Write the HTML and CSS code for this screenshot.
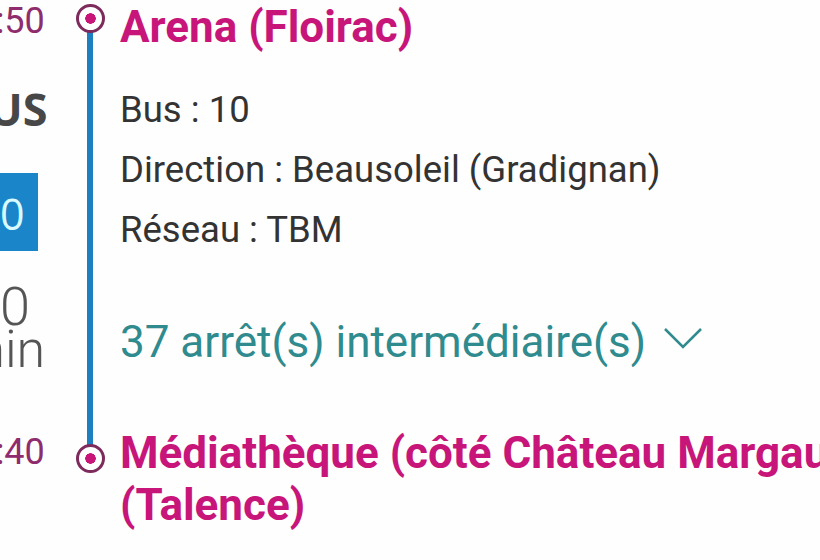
FILE: index.html
```html
<!DOCTYPE html>
<html lang="fr">
<head>
<meta charset="UTF-8">
<meta name="viewport" content="width=device-width, initial-scale=1.0">
<title>Itinéraire - Bus 10</title>
<link rel="stylesheet" href="styles.css">
</head>
<body>

<main class="journey">
    <!-- departure -->
    <div class="time time-first">13:50</div>
    <div class="rail"></div>
    <div class="node node-first"><span class="stop-dot"></span></div>
    <h2 class="stop-name stop-first">Arena (Floirac)</h2>

    <!-- leg -->
    <div class="mode">
        <div class="mode-label">BUS</div>
        <div class="line-badge">10</div>
        <div class="duration">
            <span class="duration-value">50</span>
            <span class="duration-unit">min</span>
        </div>
    </div>
    <div class="leg">
        <p>Bus : 10</p>
        <p>Direction : Beausoleil (Gradignan)</p>
        <p>Réseau : TBM</p>
        <button class="stops-toggle" type="button">
            37 arrêt(s) intermédiaire(s)
            <svg class="chevron" width="40" height="24" viewBox="0 0 40 24">
                <polyline points="2,3 20,21 38,3" fill="none" stroke="currentColor" stroke-width="2.5"/>
            </svg>
        </button>
    </div>

    <!-- arrival -->
    <div class="time time-last">14:40</div>
    <div class="node node-last"><span class="stop-dot"></span></div>
    <h2 class="stop-name stop-last">Médiathèque (côté Château Margaux) (Talence)</h2>
</main>

</body>
</html>
```

FILE: styles.css
```css
/* Global Styles */
body {
    margin: 0;
    padding-top: 3px;
    width: 820px;
    height: 560px;
    overflow: hidden;
    background-color: #fefefe;
    font-family: Roboto, "Liberation Sans", sans-serif;
    color: #333;
}

.journey {
    display: grid;
    grid-template-columns: 120px 60px 880px;
    grid-template-rows: auto auto auto;
    margin-left: -60px;
}

/* left column: times and leg summary */
.time {
    grid-column: 1;
    text-align: center;
    font-size: 36px;
    line-height: 36px;
    color: #8f2c6d;
}

.time-first {
    grid-row: 1;
}

.time-last {
    grid-row: 3;
    margin-top: 7px;
}

.mode {
    grid-column: 1;
    grid-row: 2;
    display: flex;
    flex-direction: column;
    align-items: center;
    font-family: "Open Sans", Roboto, sans-serif;
}

.mode-label {
    margin-top: 35px;
    margin-left: 6px;
    font-size: 45px;
    font-weight: bold;
    line-height: 45px;
    color: #474747;
}

.line-badge {
    margin-top: 42px;
    width: 76px;
    height: 78px;
    padding-top: 3px;
    box-sizing: border-box;
    background-color: #1a85c9;
    color: #d8fbff;
    font-size: 43px;
    line-height: 75px;
    text-align: center;
}

.duration {
    margin-top: 34px;
    display: flex;
    flex-direction: column;
    align-items: center;
    font-family: Roboto, sans-serif;
    font-weight: 300;
    color: #555;
}

.duration-value {
    font-size: 54px;
    line-height: 44px;
}

.duration-unit {
    margin-left: 4px;
    font-size: 52px;
    line-height: 42px;
}

/* middle column: the line and the stop markers */
.rail {
    grid-column: 2;
    grid-row: 1 / 4;
    justify-self: center;
    width: 6px;
    margin-top: 18px;
    margin-bottom: 73px;
    background-color: #1e7fc0;
}

.node {
    grid-column: 2;
    display: flex;
    justify-content: center;
    align-items: flex-start;
}

.node-first {
    grid-row: 1;
    margin-top: 1px;
}

.node-last {
    grid-row: 3;
    margin-top: 17px;
}

.stop-dot {
    width: 23px;
    height: 23px;
    border: 3px solid #7d2a5c;
    border-radius: 50%;
    background: radial-gradient(circle, #c8157a 5px, #fff 5.5px);
}

/* right column */
.stop-name {
    grid-column: 3;
    margin: 0;
    font-size: 44px;
    font-weight: bold;
    color: #c7157a;
}

.stop-first {
    grid-row: 1;
    line-height: 48px;
}

.stop-last {
    grid-row: 3;
    line-height: 52px;
}

.leg {
    grid-column: 3;
    grid-row: 2;
    padding-top: 29px;
    padding-bottom: 60px;
}

.leg p {
    margin: 0;
    font-size: 36.5px;
    line-height: 60px;
}

.stops-toggle {
    display: flex;
    align-items: center;
    margin-top: 57px;
    padding: 0;
    border: none;
    background: none;
    font-family: Roboto, sans-serif;
    font-size: 44px;
    line-height: 50px;
    color: #2f8b8e;
    cursor: pointer;
}

.chevron {
    margin-left: 17px;
    margin-top: -8px;
}
```
